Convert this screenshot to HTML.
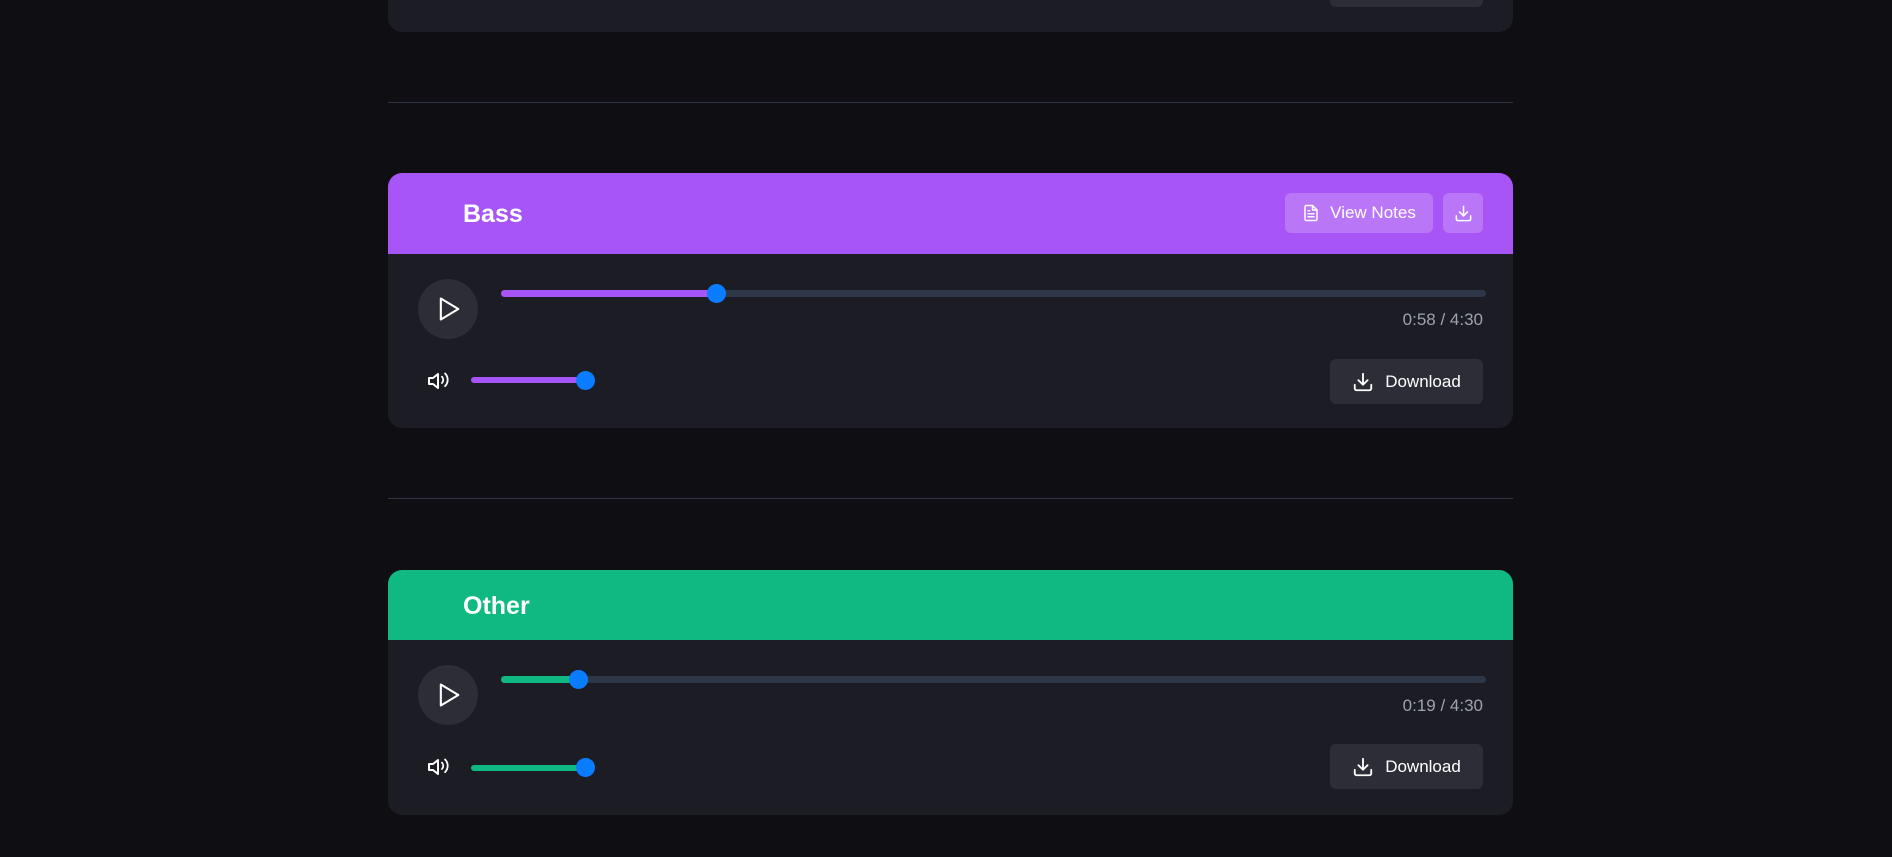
<!DOCTYPE html>
<html><head><meta charset="utf-8"><style>
*{box-sizing:border-box;margin:0;padding:0}
body{width:1892px;height:857px;background:#0f0f13;position:relative;overflow:hidden;font-family:"Liberation Sans",sans-serif;color:#fff}
.abs{position:absolute}
.card{position:absolute;left:388px;width:1125px;background:#1c1c24;border-radius:14px;overflow:hidden}
.hdr{position:absolute;left:0;top:0;width:100%}
.title{position:absolute;left:75px;font-weight:bold;font-size:25px}
.play{position:absolute;left:30px;width:60px;height:60px;border-radius:50%;background:#2d2d37}
.track{position:absolute;left:113px;width:985px;height:7px;border-radius:4px;background:#2d3748}
.fill{position:absolute;left:0;top:0;height:7px;border-radius:4px}
.thumb{position:absolute;width:19px;height:19px;border-radius:50%;background:#0a7cff}
.time{position:absolute;right:30px;font-size:17px;color:#9ca3af}
.vtrack{position:absolute;left:83px;width:115px;height:6px;border-radius:3px}
.dl{position:absolute;right:30px;width:153px;height:45px;border-radius:6px;background:#2d2d37;font-size:17px;display:flex;align-items:center;justify-content:center;gap:11px}
.div{position:absolute;left:388px;width:1125px;height:1px;background:#2e3444}
</style></head><body>
<div class="card" style="top:-20px;height:52px">
<div class="abs" style="right:30px;top:0;width:153px;height:27px;background:#2d2d37;border-radius:6px"></div>
</div>
<div class="div" style="top:102px"></div>
<div class="div" style="top:498px"></div>

<div class="card" style="top:173px;height:255px">
<div class="hdr" style="height:81px;background:#a855f7"></div>
<div class="title" style="top:27px">Bass</div>
<div class="abs" style="left:897px;top:20px;width:148px;height:40px;background:rgba(255,255,255,0.2);border-radius:6px;display:flex;align-items:center;justify-content:center;gap:10px;font-size:17px">
<svg width="18" height="18" viewBox="0 0 24 24" fill="none" stroke="#fff" stroke-width="2" stroke-linecap="round" stroke-linejoin="round"><path d="M14 2H6a2 2 0 0 0-2 2v16a2 2 0 0 0 2 2h12a2 2 0 0 0 2-2V8z"/><path d="M14 2v6h6M16 13H8M16 17H8M10 9H8"/></svg>View Notes</div>
<div class="abs" style="left:1055px;top:20px;width:40px;height:40px;background:rgba(255,255,255,0.2);border-radius:6px;display:flex;align-items:center;justify-content:center">
<svg width="19" height="19" viewBox="0 0 24 24" fill="none" stroke="#fff" stroke-width="2" stroke-linecap="round" stroke-linejoin="round"><path d="M21 15v4a2 2 0 0 1-2 2H5a2 2 0 0 1-2-2v-4M7 10l5 5 5-5M12 15V3"/></svg></div>
<div class="play" style="top:106px"><svg class="abs" style="left:17px;top:16px" width="28" height="28" viewBox="0 0 24 24" fill="none" stroke="#fff" stroke-width="1.8" stroke-linejoin="round"><path d="M5 3l15 9-15 9z"/></svg></div>
<div class="track" style="top:117px"><div class="fill" style="width:216px;background:#a855f7"></div></div>
<div class="thumb" style="left:319px;top:111px"></div>
<div class="time" style="top:137px">0:58 / 4:30</div>
<svg class="abs" style="left:39px;top:196px" width="24" height="24" viewBox="0 0 24 24" fill="none" stroke="#fff" stroke-width="2" stroke-linecap="round" stroke-linejoin="round"><path d="M11 5L6 9H2v6h4l5 4z"/><path d="M15.5 8.5a5 5 0 0 1 0 7M19 5a10 10 0 0 1 0 14" transform="translate(1 0) scale(0.9)"/></svg>
<div class="vtrack" style="top:204px;background:#a855f7"></div>
<div class="thumb" style="left:188px;top:198px"></div>
<div class="dl" style="top:186px"><svg width="22" height="22" viewBox="0 0 24 24" fill="none" stroke="#fff" stroke-width="2" stroke-linecap="round" stroke-linejoin="round"><path d="M21 15v4a2 2 0 0 1-2 2H5a2 2 0 0 1-2-2v-4M7 10l5 5 5-5M12 15V3"/></svg>Download</div>
</div>

<div class="card" style="top:570px;height:245px">
<div class="hdr" style="height:70px;background:#10b981"></div>
<div class="title" style="top:22px">Other</div>
<div class="play" style="top:95px"><svg class="abs" style="left:17px;top:16px" width="28" height="28" viewBox="0 0 24 24" fill="none" stroke="#fff" stroke-width="1.8" stroke-linejoin="round"><path d="M5 3l15 9-15 9z"/></svg></div>
<div class="track" style="top:106px"><div class="fill" style="width:78px;background:#10b981"></div></div>
<div class="thumb" style="left:181px;top:100px"></div>
<div class="time" style="top:126px">0:19 / 4:30</div>
<svg class="abs" style="left:39px;top:185px" width="24" height="24" viewBox="0 0 24 24" fill="none" stroke="#fff" stroke-width="2" stroke-linecap="round" stroke-linejoin="round"><path d="M11 5L6 9H2v6h4l5 4z"/><path d="M15.5 8.5a5 5 0 0 1 0 7M19 5a10 10 0 0 1 0 14" transform="translate(1 0) scale(0.9)"/></svg>
<div class="vtrack" style="top:195px;background:#10b981"></div>
<div class="thumb" style="left:188px;top:188px"></div>
<div class="dl" style="top:174px"><svg width="22" height="22" viewBox="0 0 24 24" fill="none" stroke="#fff" stroke-width="2" stroke-linecap="round" stroke-linejoin="round"><path d="M21 15v4a2 2 0 0 1-2 2H5a2 2 0 0 1-2-2v-4M7 10l5 5 5-5M12 15V3"/></svg>Download</div>
</div>
</body></html>
